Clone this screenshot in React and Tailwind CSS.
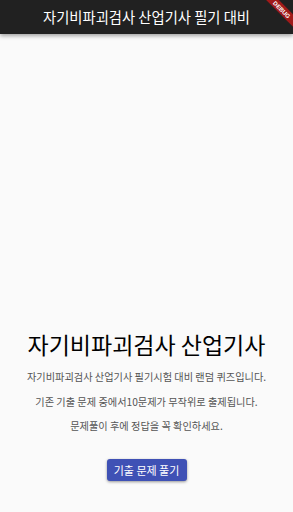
export default function App() {
  const font = { fontFamily: '"Noto Sans CJK KR", "Noto Sans", sans-serif' };
  return (
    <div className="relative w-[293px] h-[512px] bg-[#fafafa] flex flex-col overflow-hidden" style={font}>
      <header className="h-[34px] bg-[#212121] flex items-center justify-center shadow-[0_2px_4px_rgba(0,0,0,0.35)] z-10">
        <h1 className="text-white text-[14.3px] leading-none">자기비파괴검사 산업기사 필기 대비</h1>
      </header>
      <main className="flex-1 flex flex-col items-center justify-end pb-[31px]">
        <h2 className="text-[23px] leading-none text-black mb-[16px]">자기비파괴검사 산업기사</h2>
        <p className="text-[10.2px] leading-none text-[#555] mb-[14px]">자기비파괴검사 산업기사 필기시험 대비 랜덤 퀴즈입니다.</p>
        <p className="text-[10.2px] leading-none text-[#555] mb-[14px]">기존 기출 문제 중에서10문제가 무작위로 출제됩니다.</p>
        <p className="text-[10.2px] leading-none text-[#555] mb-[28px]">문제풀이 후에 정답을 꼭 확인하세요.</p>
        <button className="w-[80px] h-[22px] rounded-[3px] bg-[#3f51b5] text-white text-[11px] shadow-[0_1px_3px_rgba(0,0,0,0.4)]">
          기출 문제 풀기
        </button>
      </main>
      <div className="absolute top-[5px] right-[-19px] w-[60px] h-[9px] bg-[#a01a1a] rotate-45 flex items-center justify-center z-20">
        <span className="text-white text-[6px] font-bold leading-none" style={{ fontFamily: '"Liberation Sans", sans-serif' }}>DEBUG</span>
      </div>
    </div>
  );
}
